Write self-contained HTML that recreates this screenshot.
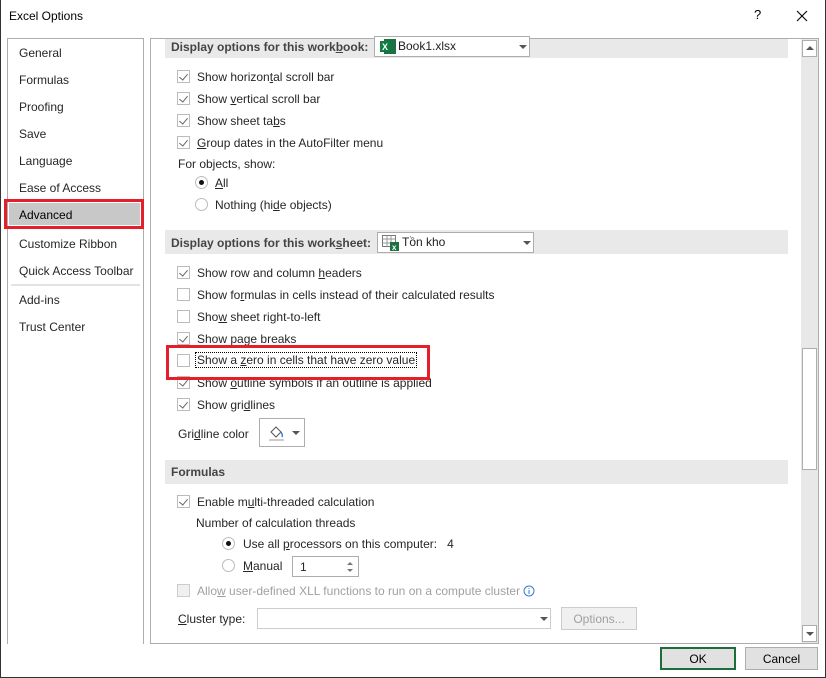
<!DOCTYPE html>
<html><head><meta charset="utf-8"><style>
*{margin:0;padding:0;box-sizing:border-box}
body{width:826px;height:678px;background:#fff;font-family:"Liberation Sans",sans-serif;font-size:12px;color:#262626;position:relative;overflow:hidden}
.a{position:absolute;white-space:nowrap;line-height:14px}
.r .a{margin-top:1px}
.cb{position:absolute;width:13px;height:13px;border:1px solid #bbb;background:#fff}
.cb.c::after{content:"";position:absolute;left:3px;top:1px;width:4px;height:7px;border-right:1px solid #666;border-bottom:1px solid #666;transform:rotate(40deg)}
.rd{position:absolute;width:13px;height:13px;border:1px solid #bbb;border-radius:50%;background:#fff}
.rd.c::after{content:"";position:absolute;left:3px;top:3px;width:5px;height:5px;border-radius:50%;background:#111}
.bar{position:absolute;left:165px;width:623px;background:#e9e9e9}
.bar span{position:absolute;left:6px;top:5px;font-weight:bold;color:#444}
.combo{position:absolute;border:1px solid #adadad;background:#fff}
.arr{position:absolute;width:0;height:0;border-left:4px solid transparent;border-right:4px solid transparent;border-top:4px solid #555}
u{text-decoration:underline}
</style></head><body>
<div style="position:absolute;left:0;top:0;width:1px;height:678px;background:#333"></div>
<div style="position:absolute;right:0;top:0;width:1px;height:678px;background:#333"></div>
<div class="a" style="left:9px;top:9px;color:#000">Excel Options</div>
<div class="a" style="left:754px;top:8px;font-size:13px;color:#000">?</div>
<svg style="position:absolute;left:796px;top:10px" width="12" height="12"><path d="M1 1L11 11M11 1L1 11" stroke="#000" stroke-width="1.1"/></svg>

<!-- left panel -->
<div style="position:absolute;left:7px;top:38px;width:137px;height:606px;border:1px solid #adadad;border-bottom:none"></div>
<div style="position:absolute;left:9px;top:203px;width:131px;height:22px;background:#c8c8c8"></div>
<div style="position:absolute;left:4px;top:199px;width:140px;height:30px;border:3px solid #e51f2a"></div>
<div class="a" style="left:19px;top:46px">General</div>
<div class="a" style="left:19px;top:73px">Formulas</div>
<div class="a" style="left:19px;top:100px">Proofing</div>
<div class="a" style="left:19px;top:127px">Save</div>
<div class="a" style="left:19px;top:154px">Language</div>
<div class="a" style="left:19px;top:181px">Ease of Access</div>
<div class="a" style="left:19px;top:208px;color:#000">Advanced</div>
<div class="a" style="left:19px;top:237px">Customize Ribbon</div>
<div class="a" style="left:19px;top:264px">Quick Access Toolbar</div>
<div style="position:absolute;left:11px;top:284px;width:129px;height:2px;background:#e3e3e3"></div>
<div class="a" style="left:19px;top:293px">Add-ins</div>
<div class="a" style="left:19px;top:320px">Trust Center</div>

<!-- right panel -->
<div style="position:absolute;left:150px;top:38px;width:669px;height:606px;border:1px solid #adadad"></div>
<div style="position:absolute;left:801px;top:39px;width:17px;height:604px;background:#e8e8e8"></div>
<div style="position:absolute;left:802px;top:40px;width:15px;height:17px;border:1px solid #adadad;background:#fff"></div>
<div class="arr" style="left:806px;top:46px;border-top:none;border-bottom:4px solid #555"></div>
<div style="position:absolute;left:802px;top:348px;width:15px;height:122px;border:1px solid #adadad;background:#fff"></div>
<div style="position:absolute;left:802px;top:625px;width:15px;height:17px;border:1px solid #adadad;background:#fff"></div>
<div class="arr" style="left:806px;top:632px"></div>

<div class="bar" style="top:39px;height:19px"><span style="top:1px">Display options for this work<u>b</u>ook:</span></div>
<div class="combo" style="left:374px;top:36px;width:156px;height:21px">
<svg style="position:absolute;left:5px;top:2px" width="16" height="15"><rect x="4" y="0" width="12" height="15" fill="#1e7145"/><rect x="0" y="2" width="10" height="11" fill="#107c41"/><text x="2" y="11" font-size="9" font-weight="bold" fill="#fff" font-family="Liberation Sans">X</text></svg>
<div class="a" style="left:23px;top:2px;color:#222">Book1.xlsx</div><div class="arr" style="left:144px;top:8px"></div></div>

<div class="r">
<div class="cb c" style="left:177px;top:70px"></div><div class="a" style="left:197px;top:69px">Show horizon<u>t</u>al scroll bar</div>
<div class="cb c" style="left:177px;top:92px"></div><div class="a" style="left:197px;top:91px">Show <u>v</u>ertical scroll bar</div>
<div class="cb c" style="left:177px;top:114px"></div><div class="a" style="left:197px;top:113px">Show sheet ta<u>b</u>s</div>
<div class="cb c" style="left:177px;top:136px"></div><div class="a" style="left:197px;top:135px"><u>G</u>roup dates in the AutoFilter menu</div>
<div class="a" style="left:178px;top:156px">For objects, show:</div>
<div class="rd c" style="left:195px;top:176px"></div><div class="a" style="left:215px;top:175px"><u>A</u>ll</div>
<div class="rd" style="left:195px;top:198px"></div><div class="a" style="left:215px;top:197px">Nothing (hi<u>d</u>e objects)</div>
</div>

<div class="bar" style="top:230px;height:24px"><span style="top:6px">Display options for this work<u>s</u>heet:</span></div>
<div class="combo" style="left:377px;top:232px;width:157px;height:21px">
<svg style="position:absolute;left:4px;top:2px" width="18" height="16"><rect x="0.5" y="0.5" width="13" height="11" fill="#fff" stroke="#777"/><path d="M0.5 4H13.5M0.5 8H13.5M5 0.5V11.5M9 0.5V11.5" stroke="#999"/><rect x="8" y="7" width="9" height="9" fill="#1e7145"/><text x="10" y="15" font-size="8" font-weight="bold" fill="#fff" font-family="Liberation Sans">x</text></svg>
<div class="a" style="left:24px;top:2px;color:#222">Tồn kho</div><div class="arr" style="left:145px;top:8px"></div></div>

<div class="r">
<div class="cb c" style="left:177px;top:266px"></div><div class="a" style="left:197px;top:265px">Show row and column <u>h</u>eaders</div>
<div class="cb" style="left:177px;top:288px"></div><div class="a" style="left:197px;top:287px">Show fo<u>r</u>mulas in cells instead of their calculated results</div>
<div class="cb" style="left:177px;top:310px"></div><div class="a" style="left:197px;top:309px">Sho<u>w</u> sheet right-to-left</div>
<div class="cb c" style="left:177px;top:332px"></div><div class="a" style="left:197px;top:331px">Show pa<u>g</u>e breaks</div>
<div class="cb" style="left:177px;top:354px"></div><div class="a" style="left:196px;top:352px;outline:1px dotted #000;padding:0 1px">Show a <u>z</u>ero in cells that have zero value</div>
<div class="cb c" style="left:177px;top:376px"></div><div class="a" style="left:197px;top:375px">Show <u>o</u>utline symbols if an outline is applied</div>
<div class="cb c" style="left:177px;top:398px"></div><div class="a" style="left:197px;top:397px">Show gri<u>d</u>lines</div>
<div class="a" style="left:178px;top:426px">Gri<u>d</u>line color</div>
</div>
<div style="position:absolute;left:166px;top:345px;width:264px;height:35px;border:3px solid #e51f2a"></div>
<div style="position:absolute;left:259px;top:418px;width:46px;height:29px;border:1px solid #adadad;background:#fff">
<svg style="position:absolute;left:8px;top:5px" width="18" height="18"><path d="M3 8L8 3L13 8L8 13Z" fill="#fff" stroke="#555"/><path d="M13 8q2 3 1 5" stroke="#3a7bd5" fill="none" stroke-width="1.5"/><rect x="1" y="15" width="15" height="2" fill="#ccc"/></svg>
<div class="arr" style="left:32px;top:12px"></div></div>

<div class="bar" style="top:460px;height:24px"><span style="top:5px">Formulas</span></div>
<div class="r">
<div class="cb c" style="left:177px;top:495px"></div><div class="a" style="left:197px;top:494px">Enable m<u>u</u>lti-threaded calculation</div>
<div class="a" style="left:196px;top:515px">Number of calculation threads</div>
<div class="rd c" style="left:222px;top:537px"></div><div class="a" style="left:243px;top:536px">Use all <u>p</u>rocessors on this computer:&nbsp;&nbsp;&nbsp;4</div>
<div class="rd" style="left:222px;top:559px"></div><div class="a" style="left:243px;top:558px"><u>M</u>anual</div>
<div class="cb" style="left:177px;top:584px;background:#f0f0f0;border-color:#ccc"></div><div class="a" style="left:197px;top:583px;color:#a0a0a0">Allo<u>w</u> user-defined XLL functions to run on a compute cluster</div>
<div class="a" style="left:178px;top:611px"><u>C</u>luster type:</div>
</div>
<div class="combo" style="left:292px;top:556px;width:67px;height:21px"><div class="a" style="left:7px;top:3px">1</div>
<div class="arr" style="left:54px;top:5px;border-top:none;border-bottom:3px solid #777;border-left-width:3px;border-right-width:3px"></div>
<div class="arr" style="left:54px;top:12px;border-top:3px solid #777;border-left-width:3px;border-right-width:3px"></div></div>
<svg style="position:absolute;left:523px;top:585px" width="12" height="12"><circle cx="6" cy="6" r="5" fill="none" stroke="#3a7bd5"/><path d="M6 5V9M6 3V4" stroke="#3a7bd5"/></svg>
<div class="combo" style="left:257px;top:608px;width:294px;height:21px;border-color:#ccc"><div class="arr" style="left:282px;top:8px"></div></div>
<div style="position:absolute;left:561px;top:607px;width:76px;height:23px;border:1px solid #ccc;background:#f0f0f0;color:#a0a0a0;text-align:center;line-height:22px">Options...</div>

<div style="position:absolute;left:660px;top:647px;width:76px;height:23px;border:2px solid #1e6e3c;background:#e1e1e1;text-align:center;line-height:20px;color:#000">OK</div>
<div style="position:absolute;left:745px;top:647px;width:73px;height:23px;border:1px solid #adadad;background:#e1e1e1;text-align:center;line-height:22px;color:#000">Cancel</div>
<div style="position:absolute;left:0;top:677px;width:826px;height:1px;background:#333"></div>
</body></html>
